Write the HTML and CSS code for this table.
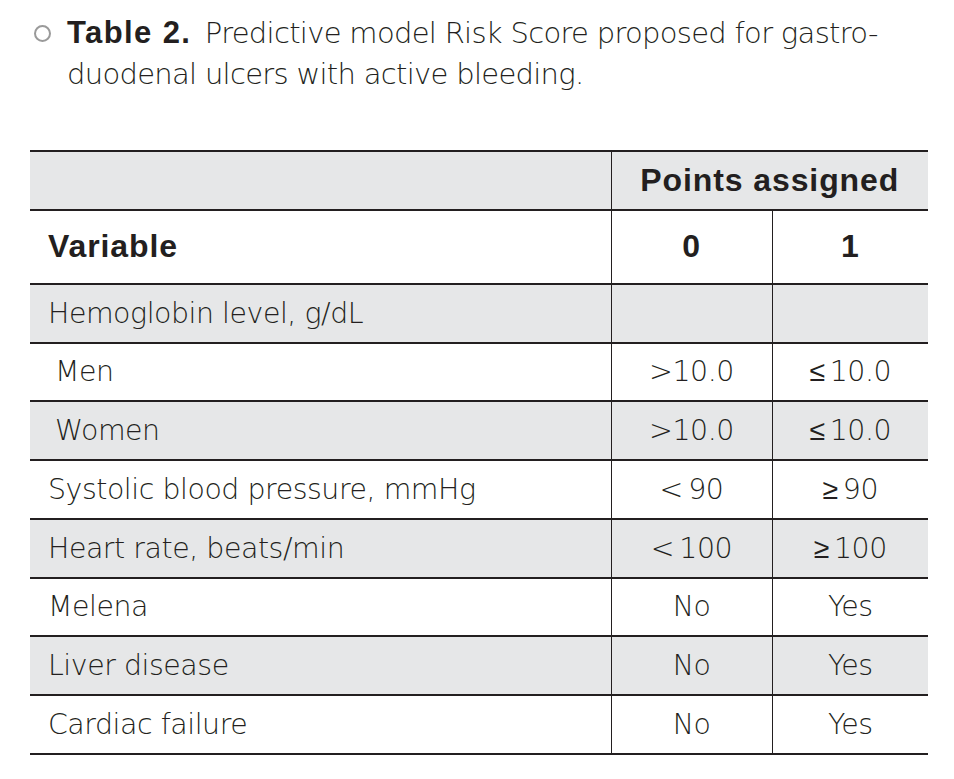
FILE: index.html
```html
<!DOCTYPE html>
<html lang="en">
<head>
<meta charset="utf-8">
<title>Table 2</title>
<link rel="stylesheet" href="styles.css">
</head>
<body>
<div class="page">
  <div class="caption">
    <span class="bullet"></span>
    <p class="caption-text"><b>Table 2.</b> Predictive model Risk Score proposed for gastro-<br>duodenal ulcers with active bleeding.</p>
  </div>
  <table class="risk">
    <colgroup>
      <col class="c-var">
      <col class="c-0">
      <col class="c-1">
    </colgroup>
    <thead>
      <tr class="h1 shade">
        <th></th>
        <th colspan="2" class="center">Points assigned</th>
      </tr>
      <tr class="h2">
        <th class="left">Variable</th>
        <th class="center">0</th>
        <th class="center">1</th>
      </tr>
    </thead>
    <tbody>
      <tr class="shade"><td>Hemoglobin level, g/dL</td><td></td><td></td></tr>
      <tr><td class="ind">Men</td><td class="center">&gt;10.0</td><td class="center">&le;&thinsp;10.0</td></tr>
      <tr class="shade"><td class="ind">Women</td><td class="center">&gt;10.0</td><td class="center">&le;&thinsp;10.0</td></tr>
      <tr><td>Systolic blood pressure, mmHg</td><td class="center">&lt;&thinsp;90</td><td class="center">&ge;&thinsp;90</td></tr>
      <tr class="shade"><td>Heart rate, beats/min</td><td class="center">&lt;&thinsp;100</td><td class="center">&ge;&thinsp;100</td></tr>
      <tr><td>Melena</td><td class="center">No</td><td class="center">Yes</td></tr>
      <tr class="shade"><td>Liver disease</td><td class="center">No</td><td class="center">Yes</td></tr>
      <tr><td>Cardiac failure</td><td class="center">No</td><td class="center">Yes</td></tr>
    </tbody>
  </table>
</div>
</body>
</html>
```

FILE: styles.css
```css
html, body {
  margin: 0;
  padding: 0;
  background: #ffffff;
}

.page {
  padding: 12px 26px 0 30px;
  font-family: "DejaVu Sans", "Liberation Sans", sans-serif;
  color: #231f20;
}

.caption {
  display: flex;
  align-items: flex-start;
}

.bullet {
  flex: none;
  width: 13px;
  height: 13px;
  border: 2.5px solid #9a9a9a;
  border-radius: 50%;
  margin: 13px 0 0 4px;
}

.caption-text {
  margin: 0 0 0 16px;
  font-size: 29px;
  line-height: 41px;
  font-weight: 200;
  letter-spacing: -0.7px;
  color: #231f20;
}

.caption-text b {
  font-family: "Liberation Sans", Arial, sans-serif;
  font-weight: 700;
  font-size: 31px;
  letter-spacing: 1.4px;
  margin-right: 5px;
}

.risk {
  margin-top: 55px;
  width: 898px;
  border-collapse: collapse;
  table-layout: fixed;
  font-size: 28.4px;
  font-weight: 200;
  letter-spacing: -0.45px;
}

.c-var { width: 581px; }
.c-0 { width: 161px; }
.c-1 { width: 156px; }

.risk tr {
  border-top: 2px solid #231f20;
  border-bottom: 2px solid #231f20;
}

.risk th, .risk td {
  padding: 0 0 0 18px;
  text-align: left;
  vertical-align: middle;
  height: 56.75px;
}

.risk th + th, .risk td + td {
  border-left: 1px solid #231f20;
}

.risk th {
  font-family: "Liberation Sans", Arial, sans-serif;
  font-weight: 700;
  letter-spacing: 0.9px;
  font-size: 32px;
}

.risk .h2 th {
  height: 72px;
}

.risk .center {
  text-align: center;
  padding: 0;
}

.risk .ind {
  padding-left: 25px;
}

.shade {
  background: #e6e7e8;
}
```
